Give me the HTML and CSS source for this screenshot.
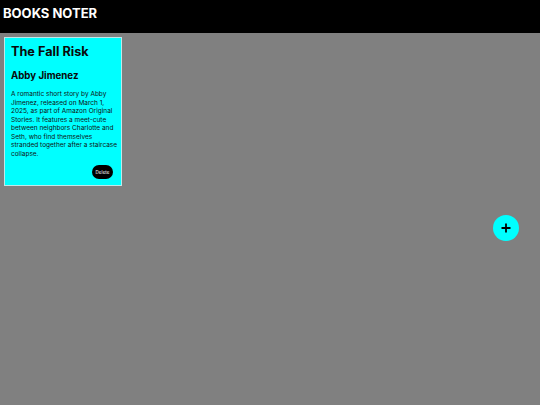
FILE: index.html
```html
<!DOCTYPE html>
<html>
<head>
<meta charset="utf-8">
<link rel="stylesheet" href="styles.css">
</head>
<body>
<header class="topbar">
  <h1 class="brand">BOOKS NOTER</h1>
</header>
<main class="board">
  <article class="note">
    <h2 class="note-title">The Fall Risk</h2>
    <h3 class="note-author">Abby Jimenez</h3>
    <p class="note-text">A romantic short story by Abby Jimenez, released on March 1, 2025, as part of Amazon Original Stories. It features a meet-cute between neighbors Charlotte and Seth, who find themselves stranded together after a staircase collapse.</p>
    <div class="note-actions"><button class="delete-btn">Delete</button></div>
  </article>
</main>
<button class="fab" aria-label="Add"><svg width="10" height="10" viewBox="0 0 10 10"><path d="M5 0.5v9M0.5 5h9" stroke="#000" stroke-width="1.8" fill="none"/></svg></button>
</body>
</html>
```
FILE: styles.css
```css
html, body {
  margin: 0;
  padding: 0;
  height: 100%;
}
body {
  background: #808080;
  font-family: Inter, "Noto Sans", sans-serif;
  color: #000;
}
.topbar {
  background: #000;
  height: 33px;
  box-sizing: border-box;
  padding: 5px 3px 0;
}
.brand {
  margin: 0;
  color: #fff;
  font-size: 13px;
  line-height: 16px;
  font-weight: 700;
}
.board {
  display: flex;
  flex-wrap: wrap;
  align-items: flex-start;
  padding: 4px;
}
.note {
  width: 118px;
  box-sizing: border-box;
  background: #00ffff;
  border: 1px solid #c0e8e8;
  padding: 6px 3px 6px 6px;
}
.note-title {
  margin: 0;
  font-size: 12.7px;
  font-weight: 700;
  line-height: 16px;
  color: #0a0a0a;
}
.note-author {
  margin: 9.5px 0 0;
  font-size: 9.7px;
  font-weight: 700;
  line-height: 12px;
  color: #0a0a0a;
}
.note-text {
  margin: 8.5px 0 0;
  font-size: 6.5px;
  line-height: 8.5px;
  color: #111;
}
.note-actions {
  display: flex;
  justify-content: flex-end;
  margin-top: 7px;
}
.delete-btn {
  background: #000;
  color: #fff;
  border: none;
  border-radius: 7px;
  font-family: Inter, sans-serif;
  font-size: 4.6px;
  padding: 0;
  height: 14px;
  width: 21px;
  margin-right: 5px;
}
.fab {
  position: fixed;
  left: 493px;
  top: 215px;
  width: 26px;
  height: 26px;
  border-radius: 50%;
  background: #00ffff;
  border: none;
  padding: 0;
  display: flex;
  align-items: center;
  justify-content: center;
}
```
